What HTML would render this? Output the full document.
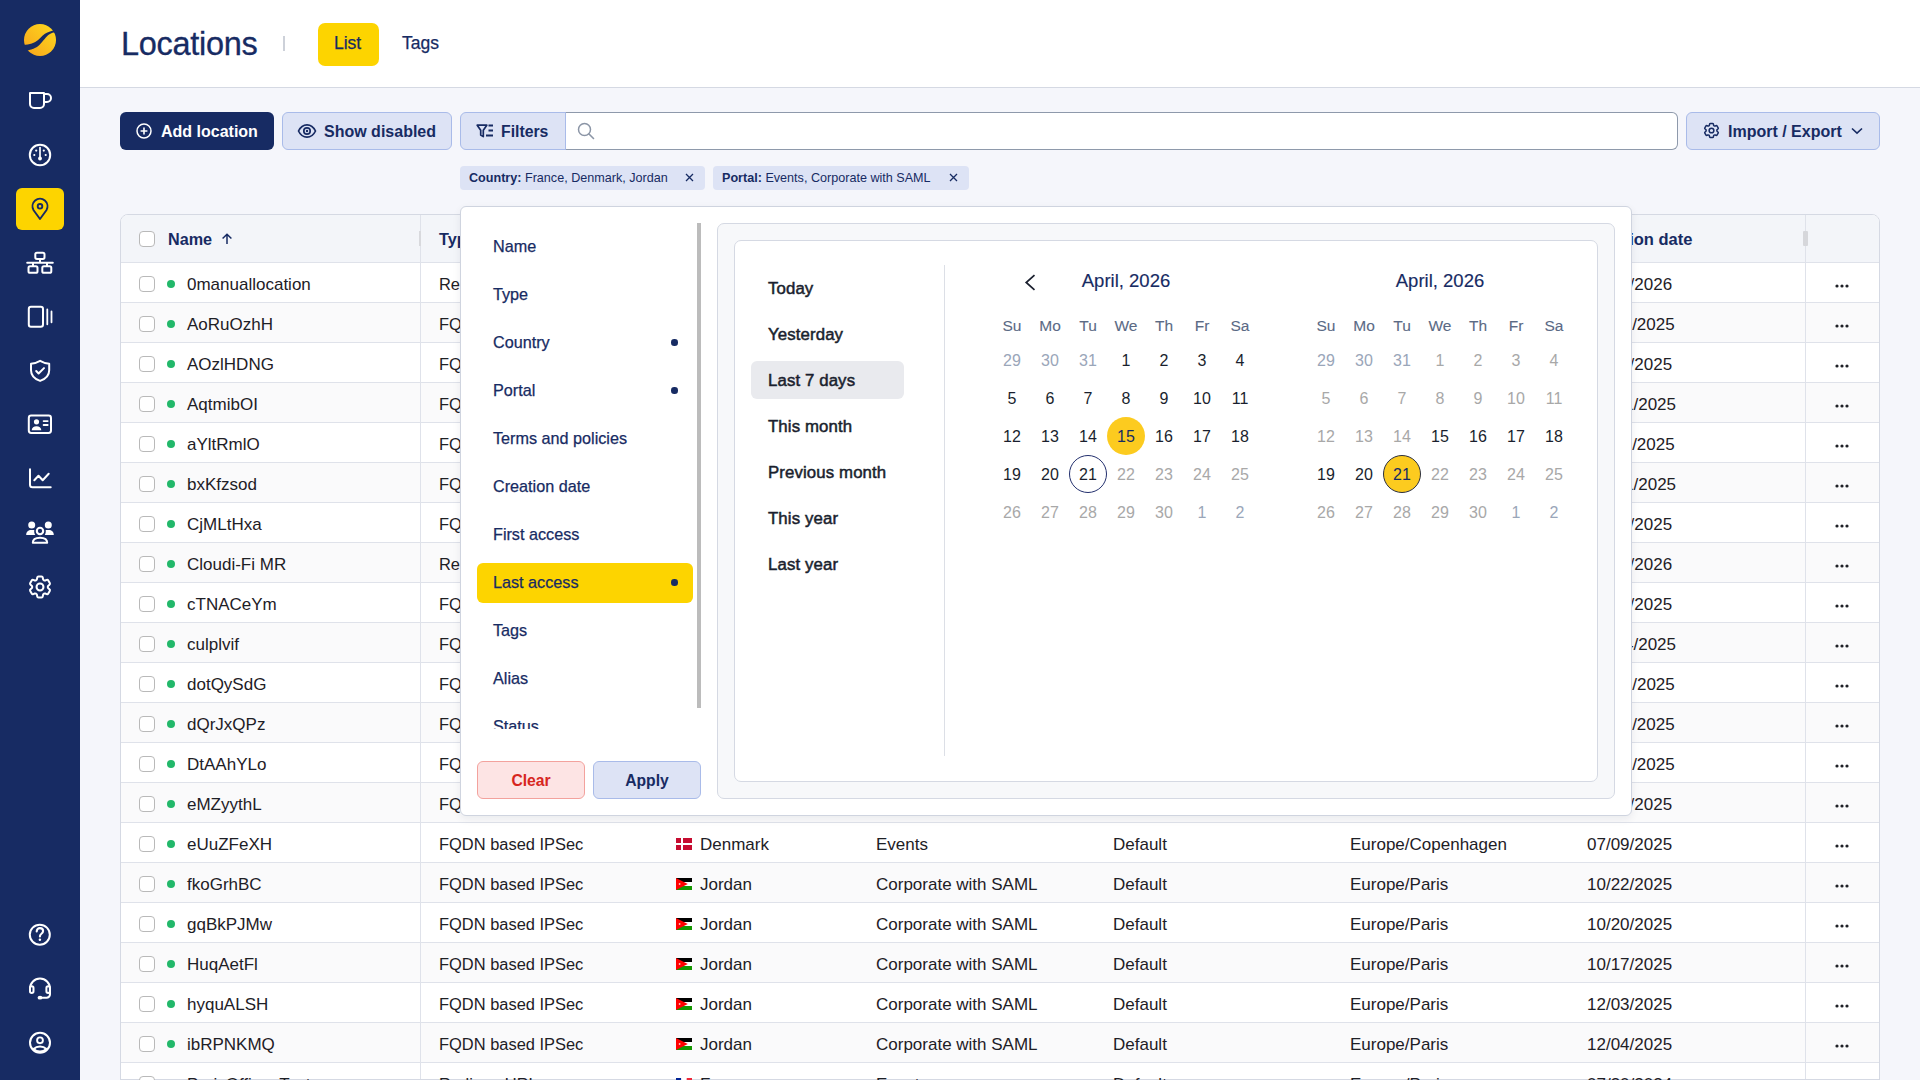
<!DOCTYPE html><html><head><meta charset="utf-8"><title>Locations</title><style>
*{box-sizing:border-box;margin:0;padding:0}
html,body{width:1920px;height:1080px;overflow:hidden;background:#f5f6fb;font-family:"Liberation Sans",sans-serif;color:#172b63}
.t{position:absolute;line-height:40px;height:40px;white-space:nowrap}
.b{position:absolute}
svg{position:absolute;overflow:visible}
</style></head><body>
<div class="b" style="left:80px;top:0;width:1840px;height:88px;background:#fff;border-bottom:1px solid #d5d9e3"></div>
<div class="t" style="left:121px;top:23.5px;font-size:32.5px;font-weight:normal;color:#172b63;letter-spacing:-0.3px;-webkit-text-stroke:0.3px #172b63">Locations</div>
<div class="b" style="left:283px;top:36px;width:2px;height:15px;background:#cdd1d9"></div>
<div class="b" style="left:318px;top:23px;width:61px;height:43px;background:#fdd400;border-radius:7px"></div>
<div class="t" style="left:334px;top:23px;font-size:17.5px;font-weight:normal;color:#172b63;-webkit-text-stroke:0.25px #172b63">List</div>
<div class="t" style="left:402px;top:23px;font-size:17.5px;font-weight:normal;color:#172b63;-webkit-text-stroke:0.25px #172b63">Tags</div>
<div class="b" style="left:120px;top:112px;width:154px;height:38px;background:#172b63;border-radius:6px"></div>
<svg style="left:136px;top:123px" width="16" height="16" viewBox="0 0 16 16"><circle cx="8" cy="8" r="7" fill="none" stroke="#fff" stroke-width="1.5"/><path d="M8 4.6v6.8M4.6 8h6.8" stroke="#fff" stroke-width="1.6"/></svg>
<div class="t" style="left:161px;top:112px;font-size:16px;font-weight:bold;color:#fff;">Add location</div>
<div class="b" style="left:282px;top:112px;width:170px;height:38px;background:#dde3f5;border:1px solid #a9bbe9;border-radius:6px"></div>
<svg style="left:297px;top:122px" width="20" height="18" viewBox="0 0 20 18"><path d="M1.5 9C3.5 4.8 6.5 2.8 10 2.8S16.5 4.8 18.5 9C16.5 13.2 13.5 15.2 10 15.2S3.5 13.2 1.5 9Z" fill="none" stroke="#172b63" stroke-width="1.7"/><circle cx="10" cy="9" r="3.2" fill="none" stroke="#172b63" stroke-width="1.7"/><circle cx="10" cy="9" r="1.2" fill="#172b63"/></svg>
<div class="t" style="left:324px;top:112px;font-size:16px;font-weight:bold;color:#172b63;">Show disabled</div>
<div class="b" style="left:565px;top:112px;width:1113px;height:38px;background:#fff;border:1px solid #8e99ab;border-left:none;border-radius:0 6px 6px 0"></div>
<div class="b" style="left:460px;top:112px;width:106px;height:38px;background:#dde3f5;border:1px solid #a9bbe9;border-radius:6px 0 0 6px"></div>
<svg style="left:476px;top:124px" width="18" height="14" viewBox="0 0 18 14"><path d="M1.2 1.2H10.8L7.3 6.2V12.6L4.7 11V6.2Z" fill="none" stroke="#172b63" stroke-width="1.7" stroke-linejoin="round"/><path d="M12.5 1.5H17M12.5 6.5H17M10 11.5H17" stroke="#172b63" stroke-width="1.8"/></svg>
<div class="t" style="left:501px;top:112px;font-size:15.8px;font-weight:bold;color:#172b63;">Filters</div>
<svg style="left:577px;top:122px" width="18" height="18" viewBox="0 0 18 18"><circle cx="7.5" cy="7.5" r="6" fill="none" stroke="#8b95a6" stroke-width="1.5"/><path d="M12 12L16.5 16.5" stroke="#8b95a6" stroke-width="1.6" stroke-linecap="round"/></svg>
<div class="b" style="left:1686px;top:112px;width:194px;height:38px;background:#dde3f5;border:1px solid #a9bbe9;border-radius:6px"></div>
<svg style="left:1704px;top:123.3px" width="15" height="15" viewBox="2.5 2.5 19 19"><path fill="none" stroke="#172b63" stroke-width="1.9" stroke-linejoin="round" d="M9.594 3.94c.09-.542.56-.94 1.11-.94h2.593c.55 0 1.02.398 1.11.94l.213 1.281c.063.374.313.686.645.87.074.04.147.083.22.127.325.196.72.257 1.075.124l1.217-.456a1.125 1.125 0 0 1 1.37.49l1.296 2.247a1.125 1.125 0 0 1-.26 1.431l-1.003.827c-.293.241-.438.613-.43.992a7.723 7.723 0 0 1 0 .255c-.008.378.137.75.43.991l1.004.827c.424.35.534.955.26 1.43l-1.298 2.247a1.125 1.125 0 0 1-1.369.491l-1.217-.456c-.355-.133-.75-.072-1.076.124a6.47 6.47 0 0 1-.22.128c-.331.183-.581.495-.644.869l-.213 1.281c-.09.543-.56.94-1.11.94h-2.594c-.55 0-1.019-.398-1.11-.94l-.213-1.281c-.062-.374-.312-.686-.644-.87a6.52 6.52 0 0 1-.22-.127c-.325-.196-.72-.257-1.076-.124l-1.217.456a1.125 1.125 0 0 1-1.369-.49l-1.297-2.247a1.125 1.125 0 0 1 .26-1.431l1.004-.827c.292-.24.437-.613.43-.991a6.932 6.932 0 0 1 0-.255c.007-.38-.138-.751-.43-.992l-1.004-.827a1.125 1.125 0 0 1-.26-1.43l1.297-2.247a1.125 1.125 0 0 1 1.37-.491l1.216.456c.356.133.751.072 1.076-.124.072-.044.146-.086.22-.128.332-.183.582-.495.644-.869l.214-1.28Z"/><circle cx="12" cy="12" r="3" fill="none" stroke="#172b63" stroke-width="1.9"/></svg>
<div class="t" style="left:1728px;top:112px;font-size:16px;font-weight:bold;color:#172b63;">Import / Export</div>
<svg style="left:1851px;top:127px" width="12" height="8" viewBox="0 0 12 8"><path d="M1 1.5L6 6.2L11 1.5" fill="none" stroke="#172b63" stroke-width="1.6"/></svg>
<div class="b" style="left:460px;top:166px;width:245px;height:24px;background:#dde3f5;border-radius:4px"></div>
<div class="t" style="left:469px;top:158px;font-size:12.6px;font-weight:normal;color:#172b63;"><b>Country:</b> France, Denmark, Jordan</div>
<svg style="left:685px;top:173px" width="9" height="9" viewBox="0 0 9 9"><path d="M1 1L8 8M8 1L1 8" stroke="#172b63" stroke-width="1.3"/></svg>
<div class="b" style="left:713px;top:166px;width:256px;height:24px;background:#dde3f5;border-radius:4px"></div>
<div class="t" style="left:722px;top:158px;font-size:12.6px;font-weight:normal;color:#172b63;"><b>Portal:</b> Events, Corporate with SAML</div>
<svg style="left:949px;top:173px" width="9" height="9" viewBox="0 0 9 9"><path d="M1 1L8 8M8 1L1 8" stroke="#172b63" stroke-width="1.3"/></svg>
<div class="b" style="left:120px;top:214px;width:1760px;height:900px;background:#fff;border:1px solid #d5d9e3;border-radius:8px;overflow:hidden">
<div class="b" style="left:0;top:0;width:1760px;height:48px;background:#f3f5f9;border-bottom:1px solid #d5d9e3"></div>
</div>
<div class="b" style="left:139px;top:231px;width:16px;height:16px;background:#fff;border:1px solid #b9b9b9;border-radius:4px"></div>
<div class="t" style="left:168px;top:219px;font-size:16.2px;font-weight:bold;color:#172b63;">Name</div>
<svg style="left:221px;top:233px" width="12" height="12" viewBox="0 0 12 12"><path d="M6 11V1.5M1.6 5.5L6 1.2L10.4 5.5" fill="none" stroke="#172b63" stroke-width="1.5"/></svg>
<div class="t" style="left:439px;top:219px;font-size:16.2px;font-weight:bold;color:#172b63;">Type</div>
<div class="t" style="left:1587px;top:219px;font-size:16.5px;font-weight:bold;color:#172b63;">Creation date</div>
<div class="b" style="left:121px;top:262px;width:1758px;height:40px;background:#fff;border-top:1px solid #dfe2ea"></div>
<div class="b" style="left:121px;top:302px;width:1758px;height:40px;background:#fafafb;border-top:1px solid #dfe2ea"></div>
<div class="b" style="left:121px;top:342px;width:1758px;height:40px;background:#fff;border-top:1px solid #dfe2ea"></div>
<div class="b" style="left:121px;top:382px;width:1758px;height:40px;background:#fafafb;border-top:1px solid #dfe2ea"></div>
<div class="b" style="left:121px;top:422px;width:1758px;height:40px;background:#fff;border-top:1px solid #dfe2ea"></div>
<div class="b" style="left:121px;top:462px;width:1758px;height:40px;background:#fafafb;border-top:1px solid #dfe2ea"></div>
<div class="b" style="left:121px;top:502px;width:1758px;height:40px;background:#fff;border-top:1px solid #dfe2ea"></div>
<div class="b" style="left:121px;top:542px;width:1758px;height:40px;background:#fafafb;border-top:1px solid #dfe2ea"></div>
<div class="b" style="left:121px;top:582px;width:1758px;height:40px;background:#fff;border-top:1px solid #dfe2ea"></div>
<div class="b" style="left:121px;top:622px;width:1758px;height:40px;background:#fafafb;border-top:1px solid #dfe2ea"></div>
<div class="b" style="left:121px;top:662px;width:1758px;height:40px;background:#fff;border-top:1px solid #dfe2ea"></div>
<div class="b" style="left:121px;top:702px;width:1758px;height:40px;background:#fafafb;border-top:1px solid #dfe2ea"></div>
<div class="b" style="left:121px;top:742px;width:1758px;height:40px;background:#fff;border-top:1px solid #dfe2ea"></div>
<div class="b" style="left:121px;top:782px;width:1758px;height:40px;background:#fafafb;border-top:1px solid #dfe2ea"></div>
<div class="b" style="left:121px;top:822px;width:1758px;height:40px;background:#fff;border-top:1px solid #dfe2ea"></div>
<div class="b" style="left:121px;top:862px;width:1758px;height:40px;background:#fafafb;border-top:1px solid #dfe2ea"></div>
<div class="b" style="left:121px;top:902px;width:1758px;height:40px;background:#fff;border-top:1px solid #dfe2ea"></div>
<div class="b" style="left:121px;top:942px;width:1758px;height:40px;background:#fafafb;border-top:1px solid #dfe2ea"></div>
<div class="b" style="left:121px;top:982px;width:1758px;height:40px;background:#fff;border-top:1px solid #dfe2ea"></div>
<div class="b" style="left:121px;top:1022px;width:1758px;height:40px;background:#fafafb;border-top:1px solid #dfe2ea"></div>
<div class="b" style="left:121px;top:1062px;width:1758px;height:40px;background:#fff;border-top:1px solid #dfe2ea"></div>
<div class="b" style="left:420px;top:215px;width:1px;height:865px;background:#dfe2ea"></div>
<div class="b" style="left:1805px;top:215px;width:1px;height:865px;background:#dfe2ea"></div>
<div class="b" style="left:419px;top:231px;width:2px;height:15px;background:#d8d9dd"></div>
<div class="b" style="left:1803px;top:231px;width:5px;height:15px;border-radius:1px;background:#d6d7db"></div>
<div class="b" style="left:120px;top:1079px;width:1760px;height:1px;background:#d5d9e3"></div>
<div class="b" style="left:139px;top:276px;width:16px;height:16px;background:#fff;border:1px solid #b9b9b9;border-radius:4px"></div>
<div class="b" style="left:167px;top:280px;width:8px;height:8px;border-radius:50%;background:#22b86a"></div>
<div class="t" style="left:187px;top:265px;font-size:17px;font-weight:normal;color:#1e2026;">0manuallocation</div>
<div class="t" style="left:439px;top:264.4px;font-size:16.45px;font-weight:normal;color:#1e2026;">Remote</div>
<svg style="left:676px;top:278px" width="16" height="12" viewBox="0 0 16 12"><rect width="5.3" height="12" fill="#002395"/><rect x="5.3" width="5.4" height="12" fill="#fff"/><rect x="10.7" width="5.3" height="12" fill="#ed2939"/></svg>
<div class="t" style="left:700px;top:265px;font-size:17px;font-weight:normal;color:#1e2026;">France</div>
<div class="t" style="left:876px;top:265px;font-size:17px;font-weight:normal;color:#1e2026;">Events</div>
<div class="t" style="left:1113px;top:265px;font-size:17px;font-weight:normal;color:#1e2026;">Default</div>
<div class="t" style="left:1350px;top:265px;font-size:17px;font-weight:normal;color:#1e2026;">Europe/Paris</div>
<div class="t" style="left:1587px;top:265px;font-size:17px;font-weight:normal;color:#1e2026;">01/14/2026</div>
<svg style="left:1835px;top:284px" width="14" height="4" viewBox="0 0 14 4"><circle cx="2" cy="2" r="1.6" fill="#1e2026"/><circle cx="7" cy="2" r="1.6" fill="#1e2026"/><circle cx="12" cy="2" r="1.6" fill="#1e2026"/></svg>
<div class="b" style="left:139px;top:316px;width:16px;height:16px;background:#fff;border:1px solid #b9b9b9;border-radius:4px"></div>
<div class="b" style="left:167px;top:320px;width:8px;height:8px;border-radius:50%;background:#22b86a"></div>
<div class="t" style="left:187px;top:305px;font-size:17px;font-weight:normal;color:#1e2026;">AoRuOzhH</div>
<div class="t" style="left:439px;top:304.4px;font-size:16.45px;font-weight:normal;color:#1e2026;">FQDN based IPSec</div>
<svg style="left:676px;top:318px" width="16" height="12" viewBox="0 0 16 12"><rect width="5.3" height="12" fill="#002395"/><rect x="5.3" width="5.4" height="12" fill="#fff"/><rect x="10.7" width="5.3" height="12" fill="#ed2939"/></svg>
<div class="t" style="left:700px;top:305px;font-size:17px;font-weight:normal;color:#1e2026;">France</div>
<div class="t" style="left:876px;top:305px;font-size:17px;font-weight:normal;color:#1e2026;">Events</div>
<div class="t" style="left:1113px;top:305px;font-size:17px;font-weight:normal;color:#1e2026;">Default</div>
<div class="t" style="left:1350px;top:305px;font-size:17px;font-weight:normal;color:#1e2026;">Europe/Paris</div>
<div class="t" style="left:1589.6px;top:305px;font-size:17px;font-weight:normal;color:#1e2026;">10/19/2025</div>
<svg style="left:1835px;top:324px" width="14" height="4" viewBox="0 0 14 4"><circle cx="2" cy="2" r="1.6" fill="#1e2026"/><circle cx="7" cy="2" r="1.6" fill="#1e2026"/><circle cx="12" cy="2" r="1.6" fill="#1e2026"/></svg>
<div class="b" style="left:139px;top:356px;width:16px;height:16px;background:#fff;border:1px solid #b9b9b9;border-radius:4px"></div>
<div class="b" style="left:167px;top:360px;width:8px;height:8px;border-radius:50%;background:#22b86a"></div>
<div class="t" style="left:187px;top:345px;font-size:17px;font-weight:normal;color:#1e2026;">AOzlHDNG</div>
<div class="t" style="left:439px;top:344.4px;font-size:16.45px;font-weight:normal;color:#1e2026;">FQDN based IPSec</div>
<svg style="left:676px;top:358px" width="16" height="12" viewBox="0 0 16 12"><rect width="5.3" height="12" fill="#002395"/><rect x="5.3" width="5.4" height="12" fill="#fff"/><rect x="10.7" width="5.3" height="12" fill="#ed2939"/></svg>
<div class="t" style="left:700px;top:345px;font-size:17px;font-weight:normal;color:#1e2026;">France</div>
<div class="t" style="left:876px;top:345px;font-size:17px;font-weight:normal;color:#1e2026;">Events</div>
<div class="t" style="left:1113px;top:345px;font-size:17px;font-weight:normal;color:#1e2026;">Default</div>
<div class="t" style="left:1350px;top:345px;font-size:17px;font-weight:normal;color:#1e2026;">Europe/Paris</div>
<div class="t" style="left:1587px;top:345px;font-size:17px;font-weight:normal;color:#1e2026;">10/22/2025</div>
<svg style="left:1835px;top:364px" width="14" height="4" viewBox="0 0 14 4"><circle cx="2" cy="2" r="1.6" fill="#1e2026"/><circle cx="7" cy="2" r="1.6" fill="#1e2026"/><circle cx="12" cy="2" r="1.6" fill="#1e2026"/></svg>
<div class="b" style="left:139px;top:396px;width:16px;height:16px;background:#fff;border:1px solid #b9b9b9;border-radius:4px"></div>
<div class="b" style="left:167px;top:400px;width:8px;height:8px;border-radius:50%;background:#22b86a"></div>
<div class="t" style="left:187px;top:385px;font-size:17px;font-weight:normal;color:#1e2026;">AqtmibOI</div>
<div class="t" style="left:439px;top:384.4px;font-size:16.45px;font-weight:normal;color:#1e2026;">FQDN based IPSec</div>
<svg style="left:676px;top:398px" width="16" height="12" viewBox="0 0 16 12"><rect width="5.3" height="12" fill="#002395"/><rect x="5.3" width="5.4" height="12" fill="#fff"/><rect x="10.7" width="5.3" height="12" fill="#ed2939"/></svg>
<div class="t" style="left:700px;top:385px;font-size:17px;font-weight:normal;color:#1e2026;">France</div>
<div class="t" style="left:876px;top:385px;font-size:17px;font-weight:normal;color:#1e2026;">Events</div>
<div class="t" style="left:1113px;top:385px;font-size:17px;font-weight:normal;color:#1e2026;">Default</div>
<div class="t" style="left:1350px;top:385px;font-size:17px;font-weight:normal;color:#1e2026;">Europe/Paris</div>
<div class="t" style="left:1592.2px;top:385px;font-size:17px;font-weight:normal;color:#1e2026;">10/11/2025</div>
<svg style="left:1835px;top:404px" width="14" height="4" viewBox="0 0 14 4"><circle cx="2" cy="2" r="1.6" fill="#1e2026"/><circle cx="7" cy="2" r="1.6" fill="#1e2026"/><circle cx="12" cy="2" r="1.6" fill="#1e2026"/></svg>
<div class="b" style="left:139px;top:436px;width:16px;height:16px;background:#fff;border:1px solid #b9b9b9;border-radius:4px"></div>
<div class="b" style="left:167px;top:440px;width:8px;height:8px;border-radius:50%;background:#22b86a"></div>
<div class="t" style="left:187px;top:425px;font-size:17px;font-weight:normal;color:#1e2026;">aYltRmlO</div>
<div class="t" style="left:439px;top:424.4px;font-size:16.45px;font-weight:normal;color:#1e2026;">FQDN based IPSec</div>
<svg style="left:676px;top:438px" width="16" height="12" viewBox="0 0 16 12"><rect width="5.3" height="12" fill="#002395"/><rect x="5.3" width="5.4" height="12" fill="#fff"/><rect x="10.7" width="5.3" height="12" fill="#ed2939"/></svg>
<div class="t" style="left:700px;top:425px;font-size:17px;font-weight:normal;color:#1e2026;">France</div>
<div class="t" style="left:876px;top:425px;font-size:17px;font-weight:normal;color:#1e2026;">Events</div>
<div class="t" style="left:1113px;top:425px;font-size:17px;font-weight:normal;color:#1e2026;">Default</div>
<div class="t" style="left:1350px;top:425px;font-size:17px;font-weight:normal;color:#1e2026;">Europe/Paris</div>
<div class="t" style="left:1589.6px;top:425px;font-size:17px;font-weight:normal;color:#1e2026;">10/19/2025</div>
<svg style="left:1835px;top:444px" width="14" height="4" viewBox="0 0 14 4"><circle cx="2" cy="2" r="1.6" fill="#1e2026"/><circle cx="7" cy="2" r="1.6" fill="#1e2026"/><circle cx="12" cy="2" r="1.6" fill="#1e2026"/></svg>
<div class="b" style="left:139px;top:476px;width:16px;height:16px;background:#fff;border:1px solid #b9b9b9;border-radius:4px"></div>
<div class="b" style="left:167px;top:480px;width:8px;height:8px;border-radius:50%;background:#22b86a"></div>
<div class="t" style="left:187px;top:465px;font-size:17px;font-weight:normal;color:#1e2026;">bxKfzsod</div>
<div class="t" style="left:439px;top:464.4px;font-size:16.45px;font-weight:normal;color:#1e2026;">FQDN based IPSec</div>
<svg style="left:676px;top:478px" width="16" height="12" viewBox="0 0 16 12"><rect width="5.3" height="12" fill="#002395"/><rect x="5.3" width="5.4" height="12" fill="#fff"/><rect x="10.7" width="5.3" height="12" fill="#ed2939"/></svg>
<div class="t" style="left:700px;top:465px;font-size:17px;font-weight:normal;color:#1e2026;">France</div>
<div class="t" style="left:876px;top:465px;font-size:17px;font-weight:normal;color:#1e2026;">Events</div>
<div class="t" style="left:1113px;top:465px;font-size:17px;font-weight:normal;color:#1e2026;">Default</div>
<div class="t" style="left:1350px;top:465px;font-size:17px;font-weight:normal;color:#1e2026;">Europe/Paris</div>
<div class="t" style="left:1593.5px;top:465px;font-size:17px;font-weight:normal;color:#1e2026;">11/11/2025</div>
<svg style="left:1835px;top:484px" width="14" height="4" viewBox="0 0 14 4"><circle cx="2" cy="2" r="1.6" fill="#1e2026"/><circle cx="7" cy="2" r="1.6" fill="#1e2026"/><circle cx="12" cy="2" r="1.6" fill="#1e2026"/></svg>
<div class="b" style="left:139px;top:516px;width:16px;height:16px;background:#fff;border:1px solid #b9b9b9;border-radius:4px"></div>
<div class="b" style="left:167px;top:520px;width:8px;height:8px;border-radius:50%;background:#22b86a"></div>
<div class="t" style="left:187px;top:505px;font-size:17px;font-weight:normal;color:#1e2026;">CjMLtHxa</div>
<div class="t" style="left:439px;top:504.4px;font-size:16.45px;font-weight:normal;color:#1e2026;">FQDN based IPSec</div>
<svg style="left:676px;top:518px" width="16" height="12" viewBox="0 0 16 12"><rect width="5.3" height="12" fill="#002395"/><rect x="5.3" width="5.4" height="12" fill="#fff"/><rect x="10.7" width="5.3" height="12" fill="#ed2939"/></svg>
<div class="t" style="left:700px;top:505px;font-size:17px;font-weight:normal;color:#1e2026;">France</div>
<div class="t" style="left:876px;top:505px;font-size:17px;font-weight:normal;color:#1e2026;">Events</div>
<div class="t" style="left:1113px;top:505px;font-size:17px;font-weight:normal;color:#1e2026;">Default</div>
<div class="t" style="left:1350px;top:505px;font-size:17px;font-weight:normal;color:#1e2026;">Europe/Paris</div>
<div class="t" style="left:1587px;top:505px;font-size:17px;font-weight:normal;color:#1e2026;">10/27/2025</div>
<svg style="left:1835px;top:524px" width="14" height="4" viewBox="0 0 14 4"><circle cx="2" cy="2" r="1.6" fill="#1e2026"/><circle cx="7" cy="2" r="1.6" fill="#1e2026"/><circle cx="12" cy="2" r="1.6" fill="#1e2026"/></svg>
<div class="b" style="left:139px;top:556px;width:16px;height:16px;background:#fff;border:1px solid #b9b9b9;border-radius:4px"></div>
<div class="b" style="left:167px;top:560px;width:8px;height:8px;border-radius:50%;background:#22b86a"></div>
<div class="t" style="left:187px;top:545px;font-size:17px;font-weight:normal;color:#1e2026;">Cloudi-Fi MR</div>
<div class="t" style="left:439px;top:544.4px;font-size:16.45px;font-weight:normal;color:#1e2026;">Remote</div>
<svg style="left:676px;top:558px" width="16" height="12" viewBox="0 0 16 12"><rect width="5.3" height="12" fill="#002395"/><rect x="5.3" width="5.4" height="12" fill="#fff"/><rect x="10.7" width="5.3" height="12" fill="#ed2939"/></svg>
<div class="t" style="left:700px;top:545px;font-size:17px;font-weight:normal;color:#1e2026;">France</div>
<div class="t" style="left:876px;top:545px;font-size:17px;font-weight:normal;color:#1e2026;">Events</div>
<div class="t" style="left:1113px;top:545px;font-size:17px;font-weight:normal;color:#1e2026;">Default</div>
<div class="t" style="left:1350px;top:545px;font-size:17px;font-weight:normal;color:#1e2026;">Europe/Paris</div>
<div class="t" style="left:1587px;top:545px;font-size:17px;font-weight:normal;color:#1e2026;">02/27/2026</div>
<svg style="left:1835px;top:564px" width="14" height="4" viewBox="0 0 14 4"><circle cx="2" cy="2" r="1.6" fill="#1e2026"/><circle cx="7" cy="2" r="1.6" fill="#1e2026"/><circle cx="12" cy="2" r="1.6" fill="#1e2026"/></svg>
<div class="b" style="left:139px;top:596px;width:16px;height:16px;background:#fff;border:1px solid #b9b9b9;border-radius:4px"></div>
<div class="b" style="left:167px;top:600px;width:8px;height:8px;border-radius:50%;background:#22b86a"></div>
<div class="t" style="left:187px;top:585px;font-size:17px;font-weight:normal;color:#1e2026;">cTNACeYm</div>
<div class="t" style="left:439px;top:584.4px;font-size:16.45px;font-weight:normal;color:#1e2026;">FQDN based IPSec</div>
<svg style="left:676px;top:598px" width="16" height="12" viewBox="0 0 16 12"><rect width="5.3" height="12" fill="#002395"/><rect x="5.3" width="5.4" height="12" fill="#fff"/><rect x="10.7" width="5.3" height="12" fill="#ed2939"/></svg>
<div class="t" style="left:700px;top:585px;font-size:17px;font-weight:normal;color:#1e2026;">France</div>
<div class="t" style="left:876px;top:585px;font-size:17px;font-weight:normal;color:#1e2026;">Events</div>
<div class="t" style="left:1113px;top:585px;font-size:17px;font-weight:normal;color:#1e2026;">Default</div>
<div class="t" style="left:1350px;top:585px;font-size:17px;font-weight:normal;color:#1e2026;">Europe/Paris</div>
<div class="t" style="left:1587px;top:585px;font-size:17px;font-weight:normal;color:#1e2026;">10/27/2025</div>
<svg style="left:1835px;top:604px" width="14" height="4" viewBox="0 0 14 4"><circle cx="2" cy="2" r="1.6" fill="#1e2026"/><circle cx="7" cy="2" r="1.6" fill="#1e2026"/><circle cx="12" cy="2" r="1.6" fill="#1e2026"/></svg>
<div class="b" style="left:139px;top:636px;width:16px;height:16px;background:#fff;border:1px solid #b9b9b9;border-radius:4px"></div>
<div class="b" style="left:167px;top:640px;width:8px;height:8px;border-radius:50%;background:#22b86a"></div>
<div class="t" style="left:187px;top:625px;font-size:17px;font-weight:normal;color:#1e2026;">culplvif</div>
<div class="t" style="left:439px;top:624.4px;font-size:16.45px;font-weight:normal;color:#1e2026;">FQDN based IPSec</div>
<svg style="left:676px;top:638px" width="16" height="12" viewBox="0 0 16 12"><rect width="5.3" height="12" fill="#002395"/><rect x="5.3" width="5.4" height="12" fill="#fff"/><rect x="10.7" width="5.3" height="12" fill="#ed2939"/></svg>
<div class="t" style="left:700px;top:625px;font-size:17px;font-weight:normal;color:#1e2026;">France</div>
<div class="t" style="left:876px;top:625px;font-size:17px;font-weight:normal;color:#1e2026;">Events</div>
<div class="t" style="left:1113px;top:625px;font-size:17px;font-weight:normal;color:#1e2026;">Default</div>
<div class="t" style="left:1350px;top:625px;font-size:17px;font-weight:normal;color:#1e2026;">Europe/Paris</div>
<div class="t" style="left:1592.2px;top:625px;font-size:17px;font-weight:normal;color:#1e2026;">11/14/2025</div>
<svg style="left:1835px;top:644px" width="14" height="4" viewBox="0 0 14 4"><circle cx="2" cy="2" r="1.6" fill="#1e2026"/><circle cx="7" cy="2" r="1.6" fill="#1e2026"/><circle cx="12" cy="2" r="1.6" fill="#1e2026"/></svg>
<div class="b" style="left:139px;top:676px;width:16px;height:16px;background:#fff;border:1px solid #b9b9b9;border-radius:4px"></div>
<div class="b" style="left:167px;top:680px;width:8px;height:8px;border-radius:50%;background:#22b86a"></div>
<div class="t" style="left:187px;top:665px;font-size:17px;font-weight:normal;color:#1e2026;">dotQySdG</div>
<div class="t" style="left:439px;top:664.4px;font-size:16.45px;font-weight:normal;color:#1e2026;">FQDN based IPSec</div>
<svg style="left:676px;top:678px" width="16" height="12" viewBox="0 0 16 12"><rect width="5.3" height="12" fill="#002395"/><rect x="5.3" width="5.4" height="12" fill="#fff"/><rect x="10.7" width="5.3" height="12" fill="#ed2939"/></svg>
<div class="t" style="left:700px;top:665px;font-size:17px;font-weight:normal;color:#1e2026;">France</div>
<div class="t" style="left:876px;top:665px;font-size:17px;font-weight:normal;color:#1e2026;">Events</div>
<div class="t" style="left:1113px;top:665px;font-size:17px;font-weight:normal;color:#1e2026;">Default</div>
<div class="t" style="left:1350px;top:665px;font-size:17px;font-weight:normal;color:#1e2026;">Europe/Paris</div>
<div class="t" style="left:1592.2px;top:665px;font-size:17px;font-weight:normal;color:#1e2026;">11/11/2025</div>
<svg style="left:1835px;top:684px" width="14" height="4" viewBox="0 0 14 4"><circle cx="2" cy="2" r="1.6" fill="#1e2026"/><circle cx="7" cy="2" r="1.6" fill="#1e2026"/><circle cx="12" cy="2" r="1.6" fill="#1e2026"/></svg>
<div class="b" style="left:139px;top:716px;width:16px;height:16px;background:#fff;border:1px solid #b9b9b9;border-radius:4px"></div>
<div class="b" style="left:167px;top:720px;width:8px;height:8px;border-radius:50%;background:#22b86a"></div>
<div class="t" style="left:187px;top:705px;font-size:17px;font-weight:normal;color:#1e2026;">dQrJxQPz</div>
<div class="t" style="left:439px;top:704.4px;font-size:16.45px;font-weight:normal;color:#1e2026;">FQDN based IPSec</div>
<svg style="left:676px;top:718px" width="16" height="12" viewBox="0 0 16 12"><rect width="5.3" height="12" fill="#002395"/><rect x="5.3" width="5.4" height="12" fill="#fff"/><rect x="10.7" width="5.3" height="12" fill="#ed2939"/></svg>
<div class="t" style="left:700px;top:705px;font-size:17px;font-weight:normal;color:#1e2026;">France</div>
<div class="t" style="left:876px;top:705px;font-size:17px;font-weight:normal;color:#1e2026;">Events</div>
<div class="t" style="left:1113px;top:705px;font-size:17px;font-weight:normal;color:#1e2026;">Default</div>
<div class="t" style="left:1350px;top:705px;font-size:17px;font-weight:normal;color:#1e2026;">Europe/Paris</div>
<div class="t" style="left:1589.6px;top:705px;font-size:17px;font-weight:normal;color:#1e2026;">10/19/2025</div>
<svg style="left:1835px;top:724px" width="14" height="4" viewBox="0 0 14 4"><circle cx="2" cy="2" r="1.6" fill="#1e2026"/><circle cx="7" cy="2" r="1.6" fill="#1e2026"/><circle cx="12" cy="2" r="1.6" fill="#1e2026"/></svg>
<div class="b" style="left:139px;top:756px;width:16px;height:16px;background:#fff;border:1px solid #b9b9b9;border-radius:4px"></div>
<div class="b" style="left:167px;top:760px;width:8px;height:8px;border-radius:50%;background:#22b86a"></div>
<div class="t" style="left:187px;top:745px;font-size:17px;font-weight:normal;color:#1e2026;">DtAAhYLo</div>
<div class="t" style="left:439px;top:744.4px;font-size:16.45px;font-weight:normal;color:#1e2026;">FQDN based IPSec</div>
<svg style="left:676px;top:758px" width="16" height="12" viewBox="0 0 16 12"><rect width="5.3" height="12" fill="#002395"/><rect x="5.3" width="5.4" height="12" fill="#fff"/><rect x="10.7" width="5.3" height="12" fill="#ed2939"/></svg>
<div class="t" style="left:700px;top:745px;font-size:17px;font-weight:normal;color:#1e2026;">France</div>
<div class="t" style="left:876px;top:745px;font-size:17px;font-weight:normal;color:#1e2026;">Events</div>
<div class="t" style="left:1113px;top:745px;font-size:17px;font-weight:normal;color:#1e2026;">Default</div>
<div class="t" style="left:1350px;top:745px;font-size:17px;font-weight:normal;color:#1e2026;">Europe/Paris</div>
<div class="t" style="left:1589.6px;top:745px;font-size:17px;font-weight:normal;color:#1e2026;">10/19/2025</div>
<svg style="left:1835px;top:764px" width="14" height="4" viewBox="0 0 14 4"><circle cx="2" cy="2" r="1.6" fill="#1e2026"/><circle cx="7" cy="2" r="1.6" fill="#1e2026"/><circle cx="12" cy="2" r="1.6" fill="#1e2026"/></svg>
<div class="b" style="left:139px;top:796px;width:16px;height:16px;background:#fff;border:1px solid #b9b9b9;border-radius:4px"></div>
<div class="b" style="left:167px;top:800px;width:8px;height:8px;border-radius:50%;background:#22b86a"></div>
<div class="t" style="left:187px;top:785px;font-size:17px;font-weight:normal;color:#1e2026;">eMZyythL</div>
<div class="t" style="left:439px;top:784.4px;font-size:16.45px;font-weight:normal;color:#1e2026;">FQDN based IPSec</div>
<svg style="left:676px;top:798px" width="16" height="12" viewBox="0 0 16 12"><rect width="5.3" height="12" fill="#002395"/><rect x="5.3" width="5.4" height="12" fill="#fff"/><rect x="10.7" width="5.3" height="12" fill="#ed2939"/></svg>
<div class="t" style="left:700px;top:785px;font-size:17px;font-weight:normal;color:#1e2026;">France</div>
<div class="t" style="left:876px;top:785px;font-size:17px;font-weight:normal;color:#1e2026;">Events</div>
<div class="t" style="left:1113px;top:785px;font-size:17px;font-weight:normal;color:#1e2026;">Default</div>
<div class="t" style="left:1350px;top:785px;font-size:17px;font-weight:normal;color:#1e2026;">Europe/Paris</div>
<div class="t" style="left:1587px;top:785px;font-size:17px;font-weight:normal;color:#1e2026;">10/27/2025</div>
<svg style="left:1835px;top:804px" width="14" height="4" viewBox="0 0 14 4"><circle cx="2" cy="2" r="1.6" fill="#1e2026"/><circle cx="7" cy="2" r="1.6" fill="#1e2026"/><circle cx="12" cy="2" r="1.6" fill="#1e2026"/></svg>
<div class="b" style="left:139px;top:836px;width:16px;height:16px;background:#fff;border:1px solid #b9b9b9;border-radius:4px"></div>
<div class="b" style="left:167px;top:840px;width:8px;height:8px;border-radius:50%;background:#22b86a"></div>
<div class="t" style="left:187px;top:825px;font-size:17px;font-weight:normal;color:#1e2026;">eUuZFeXH</div>
<div class="t" style="left:439px;top:824.4px;font-size:16.45px;font-weight:normal;color:#1e2026;">FQDN based IPSec</div>
<svg style="left:676px;top:838px" width="16" height="12" viewBox="0 0 16 12"><rect width="16" height="12" fill="#c60c30"/><rect x="5" width="2" height="12" fill="#fff"/><rect y="5" width="16" height="2" fill="#fff"/></svg>
<div class="t" style="left:700px;top:825px;font-size:17px;font-weight:normal;color:#1e2026;">Denmark</div>
<div class="t" style="left:876px;top:825px;font-size:17px;font-weight:normal;color:#1e2026;">Events</div>
<div class="t" style="left:1113px;top:825px;font-size:17px;font-weight:normal;color:#1e2026;">Default</div>
<div class="t" style="left:1350px;top:825px;font-size:17px;font-weight:normal;color:#1e2026;">Europe/Copenhagen</div>
<div class="t" style="left:1587px;top:825px;font-size:17px;font-weight:normal;color:#1e2026;">07/09/2025</div>
<svg style="left:1835px;top:844px" width="14" height="4" viewBox="0 0 14 4"><circle cx="2" cy="2" r="1.6" fill="#1e2026"/><circle cx="7" cy="2" r="1.6" fill="#1e2026"/><circle cx="12" cy="2" r="1.6" fill="#1e2026"/></svg>
<div class="b" style="left:139px;top:876px;width:16px;height:16px;background:#fff;border:1px solid #b9b9b9;border-radius:4px"></div>
<div class="b" style="left:167px;top:880px;width:8px;height:8px;border-radius:50%;background:#22b86a"></div>
<div class="t" style="left:187px;top:865px;font-size:17px;font-weight:normal;color:#1e2026;">fkoGrhBC</div>
<div class="t" style="left:439px;top:864.4px;font-size:16.45px;font-weight:normal;color:#1e2026;">FQDN based IPSec</div>
<svg style="left:676px;top:878px" width="16" height="12" viewBox="0 0 16 12"><rect width="16" height="4" fill="#000"/><rect y="4" width="16" height="4" fill="#fff"/><rect y="8" width="16" height="4" fill="#149600"/><path d="M0 0L11.8 6L0 12Z" fill="#f00"/><circle cx="3.6" cy="6" r=".9" fill="#fbb"/></svg>
<div class="t" style="left:700px;top:865px;font-size:17px;font-weight:normal;color:#1e2026;">Jordan</div>
<div class="t" style="left:876px;top:865px;font-size:17px;font-weight:normal;color:#1e2026;">Corporate with SAML</div>
<div class="t" style="left:1113px;top:865px;font-size:17px;font-weight:normal;color:#1e2026;">Default</div>
<div class="t" style="left:1350px;top:865px;font-size:17px;font-weight:normal;color:#1e2026;">Europe/Paris</div>
<div class="t" style="left:1587px;top:865px;font-size:17px;font-weight:normal;color:#1e2026;">10/22/2025</div>
<svg style="left:1835px;top:884px" width="14" height="4" viewBox="0 0 14 4"><circle cx="2" cy="2" r="1.6" fill="#1e2026"/><circle cx="7" cy="2" r="1.6" fill="#1e2026"/><circle cx="12" cy="2" r="1.6" fill="#1e2026"/></svg>
<div class="b" style="left:139px;top:916px;width:16px;height:16px;background:#fff;border:1px solid #b9b9b9;border-radius:4px"></div>
<div class="b" style="left:167px;top:920px;width:8px;height:8px;border-radius:50%;background:#22b86a"></div>
<div class="t" style="left:187px;top:905px;font-size:17px;font-weight:normal;color:#1e2026;">gqBkPJMw</div>
<div class="t" style="left:439px;top:904.4px;font-size:16.45px;font-weight:normal;color:#1e2026;">FQDN based IPSec</div>
<svg style="left:676px;top:918px" width="16" height="12" viewBox="0 0 16 12"><rect width="16" height="4" fill="#000"/><rect y="4" width="16" height="4" fill="#fff"/><rect y="8" width="16" height="4" fill="#149600"/><path d="M0 0L11.8 6L0 12Z" fill="#f00"/><circle cx="3.6" cy="6" r=".9" fill="#fbb"/></svg>
<div class="t" style="left:700px;top:905px;font-size:17px;font-weight:normal;color:#1e2026;">Jordan</div>
<div class="t" style="left:876px;top:905px;font-size:17px;font-weight:normal;color:#1e2026;">Corporate with SAML</div>
<div class="t" style="left:1113px;top:905px;font-size:17px;font-weight:normal;color:#1e2026;">Default</div>
<div class="t" style="left:1350px;top:905px;font-size:17px;font-weight:normal;color:#1e2026;">Europe/Paris</div>
<div class="t" style="left:1587px;top:905px;font-size:17px;font-weight:normal;color:#1e2026;">10/20/2025</div>
<svg style="left:1835px;top:924px" width="14" height="4" viewBox="0 0 14 4"><circle cx="2" cy="2" r="1.6" fill="#1e2026"/><circle cx="7" cy="2" r="1.6" fill="#1e2026"/><circle cx="12" cy="2" r="1.6" fill="#1e2026"/></svg>
<div class="b" style="left:139px;top:956px;width:16px;height:16px;background:#fff;border:1px solid #b9b9b9;border-radius:4px"></div>
<div class="b" style="left:167px;top:960px;width:8px;height:8px;border-radius:50%;background:#22b86a"></div>
<div class="t" style="left:187px;top:945px;font-size:17px;font-weight:normal;color:#1e2026;">HuqAetFl</div>
<div class="t" style="left:439px;top:944.4px;font-size:16.45px;font-weight:normal;color:#1e2026;">FQDN based IPSec</div>
<svg style="left:676px;top:958px" width="16" height="12" viewBox="0 0 16 12"><rect width="16" height="4" fill="#000"/><rect y="4" width="16" height="4" fill="#fff"/><rect y="8" width="16" height="4" fill="#149600"/><path d="M0 0L11.8 6L0 12Z" fill="#f00"/><circle cx="3.6" cy="6" r=".9" fill="#fbb"/></svg>
<div class="t" style="left:700px;top:945px;font-size:17px;font-weight:normal;color:#1e2026;">Jordan</div>
<div class="t" style="left:876px;top:945px;font-size:17px;font-weight:normal;color:#1e2026;">Corporate with SAML</div>
<div class="t" style="left:1113px;top:945px;font-size:17px;font-weight:normal;color:#1e2026;">Default</div>
<div class="t" style="left:1350px;top:945px;font-size:17px;font-weight:normal;color:#1e2026;">Europe/Paris</div>
<div class="t" style="left:1587px;top:945px;font-size:17px;font-weight:normal;color:#1e2026;">10/17/2025</div>
<svg style="left:1835px;top:964px" width="14" height="4" viewBox="0 0 14 4"><circle cx="2" cy="2" r="1.6" fill="#1e2026"/><circle cx="7" cy="2" r="1.6" fill="#1e2026"/><circle cx="12" cy="2" r="1.6" fill="#1e2026"/></svg>
<div class="b" style="left:139px;top:996px;width:16px;height:16px;background:#fff;border:1px solid #b9b9b9;border-radius:4px"></div>
<div class="b" style="left:167px;top:1000px;width:8px;height:8px;border-radius:50%;background:#22b86a"></div>
<div class="t" style="left:187px;top:985px;font-size:17px;font-weight:normal;color:#1e2026;">hyquALSH</div>
<div class="t" style="left:439px;top:984.4px;font-size:16.45px;font-weight:normal;color:#1e2026;">FQDN based IPSec</div>
<svg style="left:676px;top:998px" width="16" height="12" viewBox="0 0 16 12"><rect width="16" height="4" fill="#000"/><rect y="4" width="16" height="4" fill="#fff"/><rect y="8" width="16" height="4" fill="#149600"/><path d="M0 0L11.8 6L0 12Z" fill="#f00"/><circle cx="3.6" cy="6" r=".9" fill="#fbb"/></svg>
<div class="t" style="left:700px;top:985px;font-size:17px;font-weight:normal;color:#1e2026;">Jordan</div>
<div class="t" style="left:876px;top:985px;font-size:17px;font-weight:normal;color:#1e2026;">Corporate with SAML</div>
<div class="t" style="left:1113px;top:985px;font-size:17px;font-weight:normal;color:#1e2026;">Default</div>
<div class="t" style="left:1350px;top:985px;font-size:17px;font-weight:normal;color:#1e2026;">Europe/Paris</div>
<div class="t" style="left:1587px;top:985px;font-size:17px;font-weight:normal;color:#1e2026;">12/03/2025</div>
<svg style="left:1835px;top:1004px" width="14" height="4" viewBox="0 0 14 4"><circle cx="2" cy="2" r="1.6" fill="#1e2026"/><circle cx="7" cy="2" r="1.6" fill="#1e2026"/><circle cx="12" cy="2" r="1.6" fill="#1e2026"/></svg>
<div class="b" style="left:139px;top:1036px;width:16px;height:16px;background:#fff;border:1px solid #b9b9b9;border-radius:4px"></div>
<div class="b" style="left:167px;top:1040px;width:8px;height:8px;border-radius:50%;background:#22b86a"></div>
<div class="t" style="left:187px;top:1025px;font-size:17px;font-weight:normal;color:#1e2026;">ibRPNKMQ</div>
<div class="t" style="left:439px;top:1024.4px;font-size:16.45px;font-weight:normal;color:#1e2026;">FQDN based IPSec</div>
<svg style="left:676px;top:1038px" width="16" height="12" viewBox="0 0 16 12"><rect width="16" height="4" fill="#000"/><rect y="4" width="16" height="4" fill="#fff"/><rect y="8" width="16" height="4" fill="#149600"/><path d="M0 0L11.8 6L0 12Z" fill="#f00"/><circle cx="3.6" cy="6" r=".9" fill="#fbb"/></svg>
<div class="t" style="left:700px;top:1025px;font-size:17px;font-weight:normal;color:#1e2026;">Jordan</div>
<div class="t" style="left:876px;top:1025px;font-size:17px;font-weight:normal;color:#1e2026;">Corporate with SAML</div>
<div class="t" style="left:1113px;top:1025px;font-size:17px;font-weight:normal;color:#1e2026;">Default</div>
<div class="t" style="left:1350px;top:1025px;font-size:17px;font-weight:normal;color:#1e2026;">Europe/Paris</div>
<div class="t" style="left:1587px;top:1025px;font-size:17px;font-weight:normal;color:#1e2026;">12/04/2025</div>
<svg style="left:1835px;top:1044px" width="14" height="4" viewBox="0 0 14 4"><circle cx="2" cy="2" r="1.6" fill="#1e2026"/><circle cx="7" cy="2" r="1.6" fill="#1e2026"/><circle cx="12" cy="2" r="1.6" fill="#1e2026"/></svg>
<div class="b" style="left:139px;top:1076px;width:16px;height:16px;background:#fff;border:1px solid #b9b9b9;border-radius:4px"></div>
<div class="b" style="left:167px;top:1080px;width:8px;height:8px;border-radius:50%;background:#22b86a"></div>
<div class="t" style="left:187px;top:1065px;font-size:17px;font-weight:normal;color:#1e2026;">ParisOffice_Test</div>
<div class="t" style="left:439px;top:1064.4px;font-size:16.45px;font-weight:normal;color:#1e2026;">Radius - URL</div>
<svg style="left:676px;top:1078px" width="16" height="12" viewBox="0 0 16 12"><rect width="5.3" height="12" fill="#002395"/><rect x="5.3" width="5.4" height="12" fill="#fff"/><rect x="10.7" width="5.3" height="12" fill="#ed2939"/></svg>
<div class="t" style="left:700px;top:1065px;font-size:17px;font-weight:normal;color:#1e2026;">France</div>
<div class="t" style="left:876px;top:1065px;font-size:17px;font-weight:normal;color:#1e2026;">Events</div>
<div class="t" style="left:1113px;top:1065px;font-size:17px;font-weight:normal;color:#1e2026;">Default</div>
<div class="t" style="left:1350px;top:1065px;font-size:17px;font-weight:normal;color:#1e2026;">Europe/Paris</div>
<div class="t" style="left:1587px;top:1065px;font-size:17px;font-weight:normal;color:#1e2026;">07/30/2024</div>
<svg style="left:1835px;top:1084px" width="14" height="4" viewBox="0 0 14 4"><circle cx="2" cy="2" r="1.6" fill="#1e2026"/><circle cx="7" cy="2" r="1.6" fill="#1e2026"/><circle cx="12" cy="2" r="1.6" fill="#1e2026"/></svg>
<div class="b" style="left:0;top:0;width:80px;height:1080px;background:#172b63"></div>
<svg style="left:24px;top:24px" width="32" height="32" viewBox="0 0 32 32"><defs><linearGradient id="lg" x1="0" y1="1" x2="1" y2="0"><stop offset="0" stop-color="#f7a21b"/><stop offset="1" stop-color="#fedb1e"/></linearGradient></defs><circle cx="16" cy="16" r="16" fill="url(#lg)"/><path d="M-1 21C6 20.5 10.5 19 14.1 16C17.5 13 20 10 23.4 8.6C26 7.3 28.5 6.2 33 6L33 8C30 8 27 9 24.3 10.9C22 12.8 21 14.5 19.7 16C17 19.5 14 23 10.4 24.3C8 25.5 5 26.5 -1 27Z" fill="#172b63"/></svg>
<svg style="left:28.0px;top:88.0px" width="24" height="24" viewBox="0 0 24 24" fill="none" stroke="#fff" stroke-width="2" stroke-linecap="round" stroke-linejoin="round"><path d="M2 5h14v11a4 4 0 0 1-4 4H6a4 4 0 0 1-4-4z"/><path d="M16 6h3a4 4 0 0 1 0 8h-3"/></svg>
<svg style="left:28.0px;top:143.0px" width="24" height="24" viewBox="0 0 24 24" fill="none" stroke="#fff" stroke-width="2" stroke-linecap="round" stroke-linejoin="round"><circle cx="12" cy="12" r="10.2"/><path d="M12 4.5v10" stroke-width="1.7"/><circle cx="12" cy="15.5" r="1.9" fill="#fff" stroke="none"/><circle cx="8.2" cy="7.6" r="1.1" fill="#fff" stroke="none"/><circle cx="15.8" cy="7.6" r="1.1" fill="#fff" stroke="none"/><circle cx="6.3" cy="12" r="1.1" fill="#fff" stroke="none"/><circle cx="17.7" cy="12" r="1.1" fill="#fff" stroke="none"/></svg>
<div class="b" style="left:16px;top:188px;width:48px;height:42px;background:#fdd400;border-radius:6px"></div>
<svg style="left:28px;top:197px" width="24" height="24" viewBox="0 0 24 24" fill="none" stroke="#172b63" stroke-width="1.9" stroke-linejoin="round"><path d="M12 22L5.6 13.2A7.5 7.5 0 1 1 18.4 13.2Z"/><circle cx="12" cy="9.3" r="2.3"/></svg>
<svg style="left:22px;top:245px" width="36" height="36" viewBox="0 0 36 36" fill="none" stroke="#fff" stroke-width="2" stroke-linecap="round" stroke-linejoin="round"><rect x="13.3" y="7.7" width="9.2" height="6.2" rx="1.6"/><path d="M18 14v3.7M5.2 17.7h25.6M11 17.7v3.4M25 17.7v3.4"/><rect x="6.5" y="21.2" width="9" height="6.6" rx="1.6"/><rect x="20.3" y="21.2" width="9" height="6.6" rx="1.6"/></svg>
<svg style="left:22px;top:300px" width="36" height="36" viewBox="0 0 36 36" fill="none" stroke="#fff" stroke-width="2" stroke-linecap="round" stroke-linejoin="round"><rect x="6.8" y="6.8" width="14.2" height="20" rx="2.2"/><path d="M25.3 9.4v14.9M29.5 11.4v10.9" stroke-width="1.8"/></svg>
<svg style="left:22px;top:355px" width="36" height="36" viewBox="0 0 36 36" fill="none" stroke="#fff" stroke-width="2" stroke-linecap="round" stroke-linejoin="round"><path d="M18.1 5.8C21 7.4 24 8.4 27.2 8.8V15.2C27.2 20.2 23.5 24 18.1 25.9C12.7 24 9 20.2 9 15.2V8.8C12.2 8.4 15.2 7.4 18.1 5.8Z"/><path d="M14.2 16L16.6 18.5L22 13.1"/></svg>
<svg style="left:22px;top:400px" width="36" height="36" viewBox="0 0 36 36" fill="none" stroke="#fff" stroke-width="2" stroke-linecap="round" stroke-linejoin="round"><rect x="6.8" y="15.6" width="22.2" height="17.4" rx="2.4"/><circle cx="14.5" cy="21.8" r="2.6" fill="#fff" stroke="none"/><path d="M9.7 30.2C9.9 27.6 11.8 26.3 14.5 26.3S19.1 27.6 19.3 30.2Z" fill="#fff" stroke="none"/><path d="M21.6 21.1H25.7M21.6 25H25.7" stroke-width="1.8"/></svg>
<svg style="left:22px;top:461px" width="36" height="36" viewBox="0 0 36 36" fill="none" stroke="#fff" stroke-width="2" stroke-linecap="round" stroke-linejoin="round"><path d="M8 8.2V23.8A2.5 2.5 0 0 0 10.5 26.3H28.7"/><path d="M12.3 19.2L16.5 14.7L20.7 19.2L26.7 12.8"/></svg>
<svg style="left:22px;top:515px" width="36" height="36" viewBox="0 0 36 36"><circle cx="9.7" cy="10" r="3.5" fill="#fff"/><circle cx="26.3" cy="10" r="3.5" fill="#fff"/><path d="M4.2 20C4.2 16.8 6.4 15 9.2 15H12.3C12 16.8 12.4 18.6 13.3 20Z" fill="#fff"/><path d="M31.8 20C31.8 16.8 29.6 15 26.8 15H23.7C24 16.8 23.6 18.6 22.7 20Z" fill="#fff"/><circle cx="18" cy="16" r="3.2" fill="none" stroke="#fff" stroke-width="2.1"/><path d="M10.8 27.8C10.8 24.5 14 22.8 18 22.8S25.2 24.5 25.2 27.8Z" fill="none" stroke="#fff" stroke-width="2" stroke-linejoin="round"/></svg>
<svg style="left:29px;top:575.5px" width="22" height="22" viewBox="2.5 2.5 19 19" fill="none" stroke="#fff" stroke-width="1.75" stroke-linejoin="round"><path d="M9.594 3.94c.09-.542.56-.94 1.11-.94h2.593c.55 0 1.02.398 1.11.94l.213 1.281c.063.374.313.686.645.87.074.04.147.083.22.127.325.196.72.257 1.075.124l1.217-.456a1.125 1.125 0 0 1 1.37.49l1.296 2.247a1.125 1.125 0 0 1-.26 1.431l-1.003.827c-.293.241-.438.613-.43.992a7.723 7.723 0 0 1 0 .255c-.008.378.137.75.43.991l1.004.827c.424.35.534.955.26 1.43l-1.298 2.247a1.125 1.125 0 0 1-1.369.491l-1.217-.456c-.355-.133-.75-.072-1.076.124a6.47 6.47 0 0 1-.22.128c-.331.183-.581.495-.644.869l-.213 1.281c-.09.543-.56.94-1.11.94h-2.594c-.55 0-1.019-.398-1.11-.94l-.213-1.281c-.062-.374-.312-.686-.644-.87a6.52 6.52 0 0 1-.22-.127c-.325-.196-.72-.257-1.076-.124l-1.217.456a1.125 1.125 0 0 1-1.369-.49l-1.297-2.247a1.125 1.125 0 0 1 .26-1.431l1.004-.827c.292-.24.437-.613.43-.991a6.932 6.932 0 0 1 0-.255c.007-.38-.138-.751-.43-.992l-1.004-.827a1.125 1.125 0 0 1-.26-1.43l1.297-2.247a1.125 1.125 0 0 1 1.37-.491l1.216.456c.356.133.751.072 1.076-.124.072-.044.146-.086.22-.128.332-.183.582-.495.644-.869l.214-1.28Z"/><circle cx="12" cy="12" r="3"/></svg>
<svg style="left:22px;top:917px" width="36" height="36" viewBox="0 0 36 36" fill="none" stroke="#fff" stroke-width="2" stroke-linecap="round" stroke-linejoin="round"><circle cx="17.8" cy="17.7" r="10"/><path d="M14.7 14.4C14.7 12.4 16.1 11.1 17.9 11.1C19.8 11.1 21.1 12.4 21.1 14.1C21.1 15.6 20.2 16.3 19.2 17C18.4 17.6 17.9 18.1 17.9 19.5" stroke-width="2.1"/><circle cx="17.9" cy="22.8" r="1.25" fill="#fff" stroke="none"/></svg>
<svg style="left:22px;top:971px" width="36" height="36" viewBox="0 0 36 36" fill="none" stroke="#fff" stroke-width="2" stroke-linecap="round" stroke-linejoin="round"><path d="M8 17.5A10 10 0 0 1 28 17.5V23.3A3.4 3.4 0 0 1 24.6 26.7H19.5"/><rect x="8" y="15.3" width="3.5" height="6.7" rx="1.7" fill="#162a63"/><rect x="24.4" y="15.3" width="3.5" height="6.7" rx="1.7" fill="#162a63"/><ellipse cx="18" cy="26.7" rx="2.4" ry="1.9" fill="#fff" stroke="none"/></svg>
<svg style="left:22px;top:1025px" width="36" height="36" viewBox="0 0 36 36" fill="none" stroke="#fff" stroke-width="2" stroke-linecap="round" stroke-linejoin="round"><circle cx="18" cy="17.75" r="10"/><circle cx="18" cy="15.3" r="2.9" stroke-width="1.9"/><path d="M11.6 23.9C13.3 22.3 15.4 21.5 18 21.5S22.7 22.3 24.4 23.9" /><path d="M11.6 23.9C13.3 25.5 15.4 26.4 18 26.4S22.7 25.5 24.4 23.9" /></svg>
<div class="b" style="left:460px;top:206px;width:1172px;height:610px;background:#fff;border:1px solid #cfd4df;border-radius:6px;box-shadow:0 3px 8px rgba(20,30,60,0.07)"></div>
<div class="b" style="left:477px;top:563px;width:216px;height:40px;background:#fdd400;border-radius:6px"></div>
<div class="b" style="left:470px;top:224px;width:230px;height:505px;overflow:hidden">
<div class="t" style="left:23px;top:2px;font-size:16.2px;color:#172b63;-webkit-text-stroke:0.25px #172b63">Name</div>
<div class="t" style="left:23px;top:50px;font-size:16.2px;color:#172b63;-webkit-text-stroke:0.25px #172b63">Type</div>
<div class="t" style="left:23px;top:98px;font-size:16.2px;color:#172b63;-webkit-text-stroke:0.25px #172b63">Country</div>
<div class="b" style="left:201px;top:115px;width:6.5px;height:6.5px;border-radius:50%;background:#172b63"></div>
<div class="t" style="left:23px;top:146px;font-size:16.2px;color:#172b63;-webkit-text-stroke:0.25px #172b63">Portal</div>
<div class="b" style="left:201px;top:163px;width:6.5px;height:6.5px;border-radius:50%;background:#172b63"></div>
<div class="t" style="left:23px;top:194px;font-size:16.2px;color:#172b63;-webkit-text-stroke:0.25px #172b63">Terms and policies</div>
<div class="t" style="left:23px;top:242px;font-size:16.2px;color:#172b63;-webkit-text-stroke:0.25px #172b63">Creation date</div>
<div class="t" style="left:23px;top:290px;font-size:16.2px;color:#172b63;-webkit-text-stroke:0.25px #172b63">First access</div>
<div class="t" style="left:23px;top:338px;font-size:16.2px;color:#172b63;-webkit-text-stroke:0.25px #172b63">Last access</div>
<div class="b" style="left:201px;top:355px;width:6.5px;height:6.5px;border-radius:50%;background:#172b63"></div>
<div class="t" style="left:23px;top:386px;font-size:16.2px;color:#172b63;-webkit-text-stroke:0.25px #172b63">Tags</div>
<div class="t" style="left:23px;top:434px;font-size:16.2px;color:#172b63;-webkit-text-stroke:0.25px #172b63">Alias</div>
<div class="t" style="left:23px;top:482px;font-size:16.2px;color:#172b63;-webkit-text-stroke:0.25px #172b63">Status</div>
</div>
<div class="b" style="left:697px;top:223px;width:4px;height:485px;background:#bcbcbc"></div>
<div class="b" style="left:477px;top:761px;width:108px;height:38px;background:#fde4e4;border:1px solid #f3a29d;border-radius:6px"></div>
<div class="t" style="left:431px;width:200px;text-align:center;top:761px;font-size:15.7px;font-weight:bold;color:#d7261e;">Clear</div>
<div class="b" style="left:593px;top:761px;width:108px;height:38px;background:#dde3f5;border:1px solid #a9bbe9;border-radius:6px"></div>
<div class="t" style="left:547px;width:200px;text-align:center;top:761px;font-size:15.7px;font-weight:bold;color:#172b63;">Apply</div>
<div class="b" style="left:717px;top:223px;width:898px;height:576px;background:#f7f8fa;border:1px solid #d5d9e3;border-radius:7px"></div>
<div class="b" style="left:734px;top:240px;width:864px;height:542px;background:#fff;border:1px solid #d5d9e3;border-radius:7px"></div>
<div class="b" style="left:751px;top:361px;width:153px;height:38px;background:#e9eaee;border-radius:6px"></div>
<div class="t" style="left:768px;top:269px;font-size:16.8px;font-weight:normal;color:#1a1f2e;-webkit-text-stroke:0.5px #1a1f2e;letter-spacing:0.12px">Today</div>
<div class="t" style="left:768px;top:315px;font-size:16.8px;font-weight:normal;color:#1a1f2e;-webkit-text-stroke:0.5px #1a1f2e;letter-spacing:0.12px">Yesterday</div>
<div class="t" style="left:768px;top:361px;font-size:16.8px;font-weight:normal;color:#1a1f2e;-webkit-text-stroke:0.5px #1a1f2e;letter-spacing:0.12px">Last 7 days</div>
<div class="t" style="left:768px;top:407px;font-size:16.8px;font-weight:normal;color:#1a1f2e;-webkit-text-stroke:0.5px #1a1f2e;letter-spacing:0.12px">This month</div>
<div class="t" style="left:768px;top:453px;font-size:16.8px;font-weight:normal;color:#1a1f2e;-webkit-text-stroke:0.5px #1a1f2e;letter-spacing:0.12px">Previous month</div>
<div class="t" style="left:768px;top:499px;font-size:16.8px;font-weight:normal;color:#1a1f2e;-webkit-text-stroke:0.5px #1a1f2e;letter-spacing:0.12px">This year</div>
<div class="t" style="left:768px;top:545px;font-size:16.8px;font-weight:normal;color:#1a1f2e;-webkit-text-stroke:0.5px #1a1f2e;letter-spacing:0.12px">Last year</div>
<div class="b" style="left:944px;top:265px;width:1px;height:491px;background:#dcdfe6"></div>
<svg style="left:1024px;top:274px" width="12" height="17" viewBox="0 0 12 17"><path d="M10.5 1.2L2.2 8.5L10.5 15.8" fill="none" stroke="#1a1f2e" stroke-width="1.7"/></svg>
<div class="t" style="left:1026px;width:200px;text-align:center;top:261px;font-size:18.5px;font-weight:normal;color:#172b63;-webkit-text-stroke:0.15px #172b63">April, 2026</div>
<div class="t" style="left:1340px;width:200px;text-align:center;top:261px;font-size:18.5px;font-weight:normal;color:#172b63;-webkit-text-stroke:0.15px #172b63">April, 2026</div>
<div class="b" style="left:1107px;top:417px;width:38px;height:38px;border-radius:50%;background:#fccb1f"></div>
<div class="b" style="left:1069px;top:455px;width:38px;height:38px;border-radius:50%;border:1.3px solid #23306e"></div>
<div class="b" style="left:1383px;top:455px;width:38px;height:38px;border-radius:50%;background:#fccb1f;border:1px solid #2b2f3e"></div>
<div class="t" style="left:912px;width:200px;text-align:center;top:305.5px;font-size:15.5px;font-weight:normal;color:#5b6a85;-webkit-text-stroke:0.1px #5b6a85">Su</div>
<div class="t" style="left:950px;width:200px;text-align:center;top:305.5px;font-size:15.5px;font-weight:normal;color:#5b6a85;-webkit-text-stroke:0.1px #5b6a85">Mo</div>
<div class="t" style="left:988px;width:200px;text-align:center;top:305.5px;font-size:15.5px;font-weight:normal;color:#5b6a85;-webkit-text-stroke:0.1px #5b6a85">Tu</div>
<div class="t" style="left:1026px;width:200px;text-align:center;top:305.5px;font-size:15.5px;font-weight:normal;color:#5b6a85;-webkit-text-stroke:0.1px #5b6a85">We</div>
<div class="t" style="left:1064px;width:200px;text-align:center;top:305.5px;font-size:15.5px;font-weight:normal;color:#5b6a85;-webkit-text-stroke:0.1px #5b6a85">Th</div>
<div class="t" style="left:1102px;width:200px;text-align:center;top:305.5px;font-size:15.5px;font-weight:normal;color:#5b6a85;-webkit-text-stroke:0.1px #5b6a85">Fr</div>
<div class="t" style="left:1140px;width:200px;text-align:center;top:305.5px;font-size:15.5px;font-weight:normal;color:#5b6a85;-webkit-text-stroke:0.1px #5b6a85">Sa</div>
<div class="t" style="left:912px;width:200px;text-align:center;top:341px;font-size:16px;font-weight:normal;color:#9aa6b9;">29</div>
<div class="t" style="left:950px;width:200px;text-align:center;top:341px;font-size:16px;font-weight:normal;color:#9aa6b9;">30</div>
<div class="t" style="left:988px;width:200px;text-align:center;top:341px;font-size:16px;font-weight:normal;color:#9aa6b9;">31</div>
<div class="t" style="left:1026px;width:200px;text-align:center;top:341px;font-size:16px;font-weight:normal;color:#1a1f2e;">1</div>
<div class="t" style="left:1064px;width:200px;text-align:center;top:341px;font-size:16px;font-weight:normal;color:#1a1f2e;">2</div>
<div class="t" style="left:1102px;width:200px;text-align:center;top:341px;font-size:16px;font-weight:normal;color:#1a1f2e;">3</div>
<div class="t" style="left:1140px;width:200px;text-align:center;top:341px;font-size:16px;font-weight:normal;color:#1a1f2e;">4</div>
<div class="t" style="left:912px;width:200px;text-align:center;top:379px;font-size:16px;font-weight:normal;color:#1a1f2e;">5</div>
<div class="t" style="left:950px;width:200px;text-align:center;top:379px;font-size:16px;font-weight:normal;color:#1a1f2e;">6</div>
<div class="t" style="left:988px;width:200px;text-align:center;top:379px;font-size:16px;font-weight:normal;color:#1a1f2e;">7</div>
<div class="t" style="left:1026px;width:200px;text-align:center;top:379px;font-size:16px;font-weight:normal;color:#1a1f2e;">8</div>
<div class="t" style="left:1064px;width:200px;text-align:center;top:379px;font-size:16px;font-weight:normal;color:#1a1f2e;">9</div>
<div class="t" style="left:1102px;width:200px;text-align:center;top:379px;font-size:16px;font-weight:normal;color:#1a1f2e;">10</div>
<div class="t" style="left:1140px;width:200px;text-align:center;top:379px;font-size:16px;font-weight:normal;color:#1a1f2e;">11</div>
<div class="t" style="left:912px;width:200px;text-align:center;top:417px;font-size:16px;font-weight:normal;color:#1a1f2e;">12</div>
<div class="t" style="left:950px;width:200px;text-align:center;top:417px;font-size:16px;font-weight:normal;color:#1a1f2e;">13</div>
<div class="t" style="left:988px;width:200px;text-align:center;top:417px;font-size:16px;font-weight:normal;color:#1a1f2e;">14</div>
<div class="t" style="left:1026px;width:200px;text-align:center;top:417px;font-size:16px;font-weight:normal;color:#172b63;">15</div>
<div class="t" style="left:1064px;width:200px;text-align:center;top:417px;font-size:16px;font-weight:normal;color:#1a1f2e;">16</div>
<div class="t" style="left:1102px;width:200px;text-align:center;top:417px;font-size:16px;font-weight:normal;color:#1a1f2e;">17</div>
<div class="t" style="left:1140px;width:200px;text-align:center;top:417px;font-size:16px;font-weight:normal;color:#1a1f2e;">18</div>
<div class="t" style="left:912px;width:200px;text-align:center;top:455px;font-size:16px;font-weight:normal;color:#1a1f2e;">19</div>
<div class="t" style="left:950px;width:200px;text-align:center;top:455px;font-size:16px;font-weight:normal;color:#1a1f2e;">20</div>
<div class="t" style="left:988px;width:200px;text-align:center;top:455px;font-size:16px;font-weight:normal;color:#1a1f2e;">21</div>
<div class="t" style="left:1026px;width:200px;text-align:center;top:455px;font-size:16px;font-weight:normal;color:#a8a8a8;">22</div>
<div class="t" style="left:1064px;width:200px;text-align:center;top:455px;font-size:16px;font-weight:normal;color:#a8a8a8;">23</div>
<div class="t" style="left:1102px;width:200px;text-align:center;top:455px;font-size:16px;font-weight:normal;color:#a8a8a8;">24</div>
<div class="t" style="left:1140px;width:200px;text-align:center;top:455px;font-size:16px;font-weight:normal;color:#a8a8a8;">25</div>
<div class="t" style="left:912px;width:200px;text-align:center;top:493px;font-size:16px;font-weight:normal;color:#a8a8a8;">26</div>
<div class="t" style="left:950px;width:200px;text-align:center;top:493px;font-size:16px;font-weight:normal;color:#a8a8a8;">27</div>
<div class="t" style="left:988px;width:200px;text-align:center;top:493px;font-size:16px;font-weight:normal;color:#a8a8a8;">28</div>
<div class="t" style="left:1026px;width:200px;text-align:center;top:493px;font-size:16px;font-weight:normal;color:#a8a8a8;">29</div>
<div class="t" style="left:1064px;width:200px;text-align:center;top:493px;font-size:16px;font-weight:normal;color:#a8a8a8;">30</div>
<div class="t" style="left:1102px;width:200px;text-align:center;top:493px;font-size:16px;font-weight:normal;color:#9aa6b9;">1</div>
<div class="t" style="left:1140px;width:200px;text-align:center;top:493px;font-size:16px;font-weight:normal;color:#9aa6b9;">2</div>
<div class="t" style="left:1226px;width:200px;text-align:center;top:305.5px;font-size:15.5px;font-weight:normal;color:#5b6a85;-webkit-text-stroke:0.1px #5b6a85">Su</div>
<div class="t" style="left:1264px;width:200px;text-align:center;top:305.5px;font-size:15.5px;font-weight:normal;color:#5b6a85;-webkit-text-stroke:0.1px #5b6a85">Mo</div>
<div class="t" style="left:1302px;width:200px;text-align:center;top:305.5px;font-size:15.5px;font-weight:normal;color:#5b6a85;-webkit-text-stroke:0.1px #5b6a85">Tu</div>
<div class="t" style="left:1340px;width:200px;text-align:center;top:305.5px;font-size:15.5px;font-weight:normal;color:#5b6a85;-webkit-text-stroke:0.1px #5b6a85">We</div>
<div class="t" style="left:1378px;width:200px;text-align:center;top:305.5px;font-size:15.5px;font-weight:normal;color:#5b6a85;-webkit-text-stroke:0.1px #5b6a85">Th</div>
<div class="t" style="left:1416px;width:200px;text-align:center;top:305.5px;font-size:15.5px;font-weight:normal;color:#5b6a85;-webkit-text-stroke:0.1px #5b6a85">Fr</div>
<div class="t" style="left:1454px;width:200px;text-align:center;top:305.5px;font-size:15.5px;font-weight:normal;color:#5b6a85;-webkit-text-stroke:0.1px #5b6a85">Sa</div>
<div class="t" style="left:1226px;width:200px;text-align:center;top:341px;font-size:16px;font-weight:normal;color:#9aa6b9;">29</div>
<div class="t" style="left:1264px;width:200px;text-align:center;top:341px;font-size:16px;font-weight:normal;color:#9aa6b9;">30</div>
<div class="t" style="left:1302px;width:200px;text-align:center;top:341px;font-size:16px;font-weight:normal;color:#9aa6b9;">31</div>
<div class="t" style="left:1340px;width:200px;text-align:center;top:341px;font-size:16px;font-weight:normal;color:#a8a8a8;">1</div>
<div class="t" style="left:1378px;width:200px;text-align:center;top:341px;font-size:16px;font-weight:normal;color:#a8a8a8;">2</div>
<div class="t" style="left:1416px;width:200px;text-align:center;top:341px;font-size:16px;font-weight:normal;color:#a8a8a8;">3</div>
<div class="t" style="left:1454px;width:200px;text-align:center;top:341px;font-size:16px;font-weight:normal;color:#a8a8a8;">4</div>
<div class="t" style="left:1226px;width:200px;text-align:center;top:379px;font-size:16px;font-weight:normal;color:#a8a8a8;">5</div>
<div class="t" style="left:1264px;width:200px;text-align:center;top:379px;font-size:16px;font-weight:normal;color:#a8a8a8;">6</div>
<div class="t" style="left:1302px;width:200px;text-align:center;top:379px;font-size:16px;font-weight:normal;color:#a8a8a8;">7</div>
<div class="t" style="left:1340px;width:200px;text-align:center;top:379px;font-size:16px;font-weight:normal;color:#a8a8a8;">8</div>
<div class="t" style="left:1378px;width:200px;text-align:center;top:379px;font-size:16px;font-weight:normal;color:#a8a8a8;">9</div>
<div class="t" style="left:1416px;width:200px;text-align:center;top:379px;font-size:16px;font-weight:normal;color:#a8a8a8;">10</div>
<div class="t" style="left:1454px;width:200px;text-align:center;top:379px;font-size:16px;font-weight:normal;color:#a8a8a8;">11</div>
<div class="t" style="left:1226px;width:200px;text-align:center;top:417px;font-size:16px;font-weight:normal;color:#a8a8a8;">12</div>
<div class="t" style="left:1264px;width:200px;text-align:center;top:417px;font-size:16px;font-weight:normal;color:#a8a8a8;">13</div>
<div class="t" style="left:1302px;width:200px;text-align:center;top:417px;font-size:16px;font-weight:normal;color:#a8a8a8;">14</div>
<div class="t" style="left:1340px;width:200px;text-align:center;top:417px;font-size:16px;font-weight:normal;color:#1a1f2e;">15</div>
<div class="t" style="left:1378px;width:200px;text-align:center;top:417px;font-size:16px;font-weight:normal;color:#1a1f2e;">16</div>
<div class="t" style="left:1416px;width:200px;text-align:center;top:417px;font-size:16px;font-weight:normal;color:#1a1f2e;">17</div>
<div class="t" style="left:1454px;width:200px;text-align:center;top:417px;font-size:16px;font-weight:normal;color:#1a1f2e;">18</div>
<div class="t" style="left:1226px;width:200px;text-align:center;top:455px;font-size:16px;font-weight:normal;color:#1a1f2e;">19</div>
<div class="t" style="left:1264px;width:200px;text-align:center;top:455px;font-size:16px;font-weight:normal;color:#1a1f2e;">20</div>
<div class="t" style="left:1302px;width:200px;text-align:center;top:455px;font-size:16px;font-weight:normal;color:#172b63;">21</div>
<div class="t" style="left:1340px;width:200px;text-align:center;top:455px;font-size:16px;font-weight:normal;color:#a8a8a8;">22</div>
<div class="t" style="left:1378px;width:200px;text-align:center;top:455px;font-size:16px;font-weight:normal;color:#a8a8a8;">23</div>
<div class="t" style="left:1416px;width:200px;text-align:center;top:455px;font-size:16px;font-weight:normal;color:#a8a8a8;">24</div>
<div class="t" style="left:1454px;width:200px;text-align:center;top:455px;font-size:16px;font-weight:normal;color:#a8a8a8;">25</div>
<div class="t" style="left:1226px;width:200px;text-align:center;top:493px;font-size:16px;font-weight:normal;color:#a8a8a8;">26</div>
<div class="t" style="left:1264px;width:200px;text-align:center;top:493px;font-size:16px;font-weight:normal;color:#a8a8a8;">27</div>
<div class="t" style="left:1302px;width:200px;text-align:center;top:493px;font-size:16px;font-weight:normal;color:#a8a8a8;">28</div>
<div class="t" style="left:1340px;width:200px;text-align:center;top:493px;font-size:16px;font-weight:normal;color:#a8a8a8;">29</div>
<div class="t" style="left:1378px;width:200px;text-align:center;top:493px;font-size:16px;font-weight:normal;color:#a8a8a8;">30</div>
<div class="t" style="left:1416px;width:200px;text-align:center;top:493px;font-size:16px;font-weight:normal;color:#9aa6b9;">1</div>
<div class="t" style="left:1454px;width:200px;text-align:center;top:493px;font-size:16px;font-weight:normal;color:#9aa6b9;">2</div>
</body></html>
